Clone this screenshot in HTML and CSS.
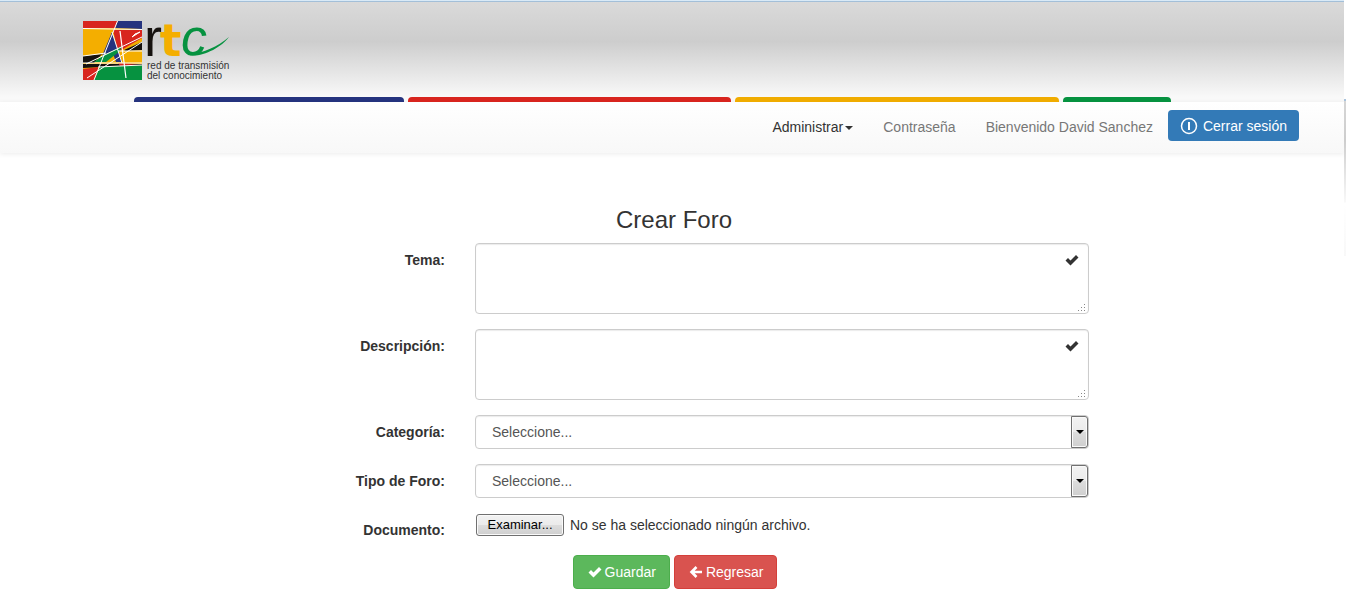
FILE: index.html
```html
<!DOCTYPE html>
<html lang="es">
<head>
<meta charset="utf-8">
<meta name="viewport" content="width=device-width, initial-scale=1">
<title>Crear Foro</title>
<link rel="stylesheet" href="styles.css">
</head>
<body>
<header class="banner">
  <a class="brand" href="#" aria-label="rtc">
    <svg width="150" height="64" viewBox="0 0 150 64" role="img" aria-label="rtc">
      <rect x="1" y="1" width="59" height="59" fill="#f4ae00"/>
      <path d="M1 1H36L33 8L1 8Z" fill="#d8251e"/>
      <path d="M36 1H60V9L33 8Z" fill="#25337e"/>
      <path d="M31 10H60V18L36 32Z" fill="#d8251e"/>
      <path d="M30 12L40 42H34L30 31L20 36Z" fill="#25337e"/>
      <path d="M60 22V30L43 31L42 30Z" fill="#16120f"/>
      <path d="M1 36L20 34L12 43H1Z" fill="#16120f"/>
      <path d="M42 31H60V43L40 42Z" fill="#f4ae00"/>
      <path d="M12 42L20 36L40 26L38 31L24 42Z" fill="#069240"/>
      <path d="M1 44H60V45L1 48Z" fill="#16120f"/>
      <path d="M36 43L56 44L38 46Z" fill="#d8251e"/>
      <path d="M1 49L17 47L12 60H1Z" fill="#d8251e"/>
      <path d="M18 47L60 45V60H12Z" fill="#069240"/>
      <g stroke="#fff" fill="none">
        <path d="M1 8.500L60 9.500M35.500 1L12 60M30 12L40 43M4 44L60 17M5 58L60 22M1 36L24 33M1 43H60M16 47L60 45M36 31L60 31"/>
        <path d="M38 11L44 58" stroke-width="1.200"/>
        <path d="M58 12L50 17L53 14Z" fill="#fff"/>
      </g>
      <text class="mark mark-r" x="62" y="36">r</text>
      <text class="mark mark-t" x="78" y="36">t</text>
      <text class="mark mark-c" x="99" y="35">c</text>
      <path d="M105 33C117 35 134 28 147 17C139 28 119 38 106 35Z" fill="#069240"/>
      <text class="motto" x="65" y="49">red de transmisión</text>
      <text class="motto" x="65" y="59">del conocimiento</text>
    </svg>
  </a>
  <div class="stripes">
    <span class="stripe stripe-blue"></span>
    <span class="stripe stripe-red"></span>
    <span class="stripe stripe-yellow"></span>
    <span class="stripe stripe-green"></span>
  </div>
</header>
<nav class="menu">
  <a class="menu-link menu-active" href="#">Administrar<span class="caret"></span></a>
  <a class="menu-link" href="#">Contraseña</a>
  <a class="menu-link" href="#">Bienvenido David Sanchez</a>
  <button class="logout" type="button">
    <svg width="18" height="18" viewBox="0 0 18 18" fill="none" stroke="#fff" stroke-width="1.500" aria-hidden="true"><circle cx="9" cy="9" r="7.500"/><path d="M9 5V13" stroke-width="2"/></svg>
    Cerrar sesión
  </button>
</nav>
<main class="page">
  <h1 class="title">Crear Foro</h1>
  <form class="form">
    <div class="field">
      <label class="label" for="tema">Tema:</label>
      <div class="control">
        <textarea class="area" id="tema"></textarea>
        <svg class="tick" width="14" height="12" viewBox="0 0 14 12" aria-hidden="true"><path d="M.5 6.500L3 4L5.500 6.500L11 1L13.500 3.500L5.500 11.500Z" fill="#333"/></svg>
        <svg class="grip" width="8" height="8" viewBox="0 0 8 8" aria-hidden="true"><path d="M6 0h1v1h-1zM3 3h1v1h-1zM6 3h1v1h-1zM0 6h1v1h-1zM3 6h1v1h-1zM6 6h1v1h-1z" fill="#888"/></svg>
      </div>
    </div>
    <div class="field">
      <label class="label" for="descripcion">Descripción:</label>
      <div class="control">
        <textarea class="area" id="descripcion"></textarea>
        <svg class="tick" width="14" height="12" viewBox="0 0 14 12" aria-hidden="true"><path d="M.5 6.500L3 4L5.500 6.500L11 1L13.500 3.500L5.500 11.500Z" fill="#333"/></svg>
        <svg class="grip" width="8" height="8" viewBox="0 0 8 8" aria-hidden="true"><path d="M6 0h1v1h-1zM3 3h1v1h-1zM6 3h1v1h-1zM0 6h1v1h-1zM3 6h1v1h-1zM6 6h1v1h-1z" fill="#888"/></svg>
      </div>
    </div>
    <div class="field">
      <label class="label" for="categoria">Categoría:</label>
      <div class="control">
        <select class="select" id="categoria"><option>Seleccione...</option></select>
        <span class="drop" aria-hidden="true"></span>
      </div>
    </div>
    <div class="field">
      <label class="label" for="tipo">Tipo de Foro:</label>
      <div class="control">
        <select class="select" id="tipo"><option>Seleccione...</option></select>
        <span class="drop" aria-hidden="true"></span>
      </div>
    </div>
    <div class="field">
      <label class="label" for="documento">Documento:</label>
      <div class="control file">
        <button class="browse" id="documento" type="button">Examinar...</button>
        <span>No se ha seleccionado ningún archivo.</span>
      </div>
    </div>
    <div class="actions">
      <button class="btn btn-save" type="submit"><svg width="14" height="12" viewBox="0 0 14 12" aria-hidden="true"><path d="M.5 6.500L3 4L5.500 6.500L11 1L13.500 3.500L5.500 11.500Z" fill="#fff"/></svg>Guardar</button>
      <button class="btn btn-back" type="button"><svg width="14" height="14" viewBox="0 0 14 14" aria-hidden="true"><path d="M7.500 2L2.500 7L7.500 12M3 7H13" fill="none" stroke="#fff" stroke-width="2.600"/></svg>Regresar</button>
    </div>
  </form>
</main>
</body>
</html>
```
FILE: styles.css
```css
* { box-sizing: border-box; }

body {
  position: relative;
  margin: 0;
  background: #fff;
  color: #333;
  font: 14px/20px "Liberation Sans", Arial, sans-serif;
}

/* thin shaded strip along the right edge */
body::after {
  content: "";
  position: absolute;
  top: 99px;
  right: 0;
  width: 2px;
  height: 155px;
  border-top: 2px solid #a9c3dc;
  background: linear-gradient(#d6d6d6, #cdcdcd 25%, #f8f8f8 65%, #fff 66%, #f8f8f8);
}

button, select, textarea { font: inherit; }

.banner {
  display: flex;
  flex-direction: column;
  justify-content: space-between;
  min-height: 102px;
  margin-right: 2px;
  padding-top: 19px;
  border-top: 1px solid #d9eaf7;
  background: linear-gradient(#dadada, #cdcdcd 40%, #f9f9f9 95%);
  box-shadow: inset 0 1px #a3bfd8;
}

.brand {
  align-self: flex-start;
  margin-left: 82px;
}

.brand svg {
  display: block;
  overflow: visible;
}

.mark { font-family: "Liberation Sans", Arial, sans-serif; }
.mark-r { font-size: 54px; fill: #16120f; }
.mark-t { font: bold 45px "DejaVu Sans", sans-serif; fill: #f4ae00; }
.mark-c { font-size: 52px; font-style: italic; fill: #069240; }
.motto { font: 10px "Liberation Sans", Arial, sans-serif; fill: #333; }

.stripes {
  display: grid;
  grid-template-columns: 270fr 323fr 324fr 108fr 169fr;
  gap: 4px;
  padding-left: 10%;
}

.stripe {
  height: 5px;
  border-radius: 4px 4px 0 0;
}

.stripe-blue { background: #25337e; }
.stripe-red { background: #d8251e; }
.stripe-yellow { background: #f0ac00; }
.stripe-green { background: #069240; }

.menu {
  display: flex;
  justify-content: flex-end;
  align-items: flex-start;
  min-height: 51px;
  margin-right: 2px;
  padding: 8px 45px 0 0;
  background: linear-gradient(#fff, #f8f8f8);
  box-shadow: 0 1px 5px rgba(0, 0, 0, .08);
}

.menu-link {
  padding: 7px 15px 0;
  color: #777;
  text-decoration: none;
}

.menu-active { color: #333; }

.caret {
  display: inline-block;
  margin-left: 2px;
  border: 4px solid transparent;
  border-top-color: currentColor;
  border-bottom: 0;
  vertical-align: middle;
}

.logout {
  display: flex;
  align-items: center;
  gap: 5px;
  height: 31px;
  padding: 0 12px;
  border: 0;
  border-radius: 4px;
  background: #337ab7;
  color: #fff;
}

.page { padding-top: 54px; }

.title {
  margin: 0;
  padding-left: 2px;
  font-size: 24px;
  line-height: 26px;
  font-weight: normal;
  text-align: center;
}

.form {
  display: flex;
  flex-direction: column;
  gap: 15px;
  padding-top: 10px;
}

.field {
  display: grid;
  grid-template-columns: 445fr 614fr 227fr;
  column-gap: 30px;
}

.label {
  padding-top: 7px;
  font-weight: bold;
  text-align: right;
}

.control { position: relative; }

.area, .select {
  display: block;
  width: 100%;
  border: 1px solid #ccc;
  border-radius: 4px;
  background: #fff;
  box-shadow: inset 0 1px 1px rgba(0, 0, 0, .08);
  color: #555;
}

.area {
  height: 71px;
  padding: 6px 12px;
  resize: none;
}

.select {
  height: 34px;
  padding: 6px 16px;
  appearance: none;
}

.tick {
  position: absolute;
  top: 11px;
  right: 10px;
}

.grip {
  position: absolute;
  right: 3px;
  bottom: 2px;
}

.drop {
  position: absolute;
  top: 1px;
  right: 1px;
  bottom: 1px;
  display: grid;
  place-items: center;
  width: 17px;
  border: 1px solid #707070;
  border-radius: 0 3px 3px 0;
  background: linear-gradient(#f2f2f2, #ebebeb 50%, #ddd 50%, #cfcfcf);
  box-shadow: inset 0 0 0 1px #fafafa;
  pointer-events: none;
}

.drop::after {
  content: "";
  border: 4px solid transparent;
  border-top-color: #000;
  border-bottom: 0;
}

.file {
  display: flex;
  align-items: flex-start;
  gap: 6px;
  padding-left: 1px;
  line-height: 24px;
}

.browse {
  height: 22px;
  margin-top: 1px;
  width: 88px;
  padding: 0;
  border: 1px solid #707070;
  border-radius: 3px;
  background: linear-gradient(#f2f2f2, #ebebeb 50%, #ddd 50%, #cfcfcf);
  box-shadow: inset 0 0 0 1px #fafafa;
  color: #000;
  font-size: 13px;
  line-height: 20px;
}

.actions {
  display: flex;
  justify-content: center;
  gap: 4px;
  padding-left: 4px;
}

.btn {
  display: flex;
  align-items: center;
  gap: 3px;
  height: 34px;
  padding: 0 13px 0 14px;
  border: 1px solid;
  border-radius: 4px;
  color: #fff;
}

.btn-save { border-color: #4cae4c; background: #5cb85c; }
.btn-back { border-color: #d43f3a; background: #d9534f; }
```
